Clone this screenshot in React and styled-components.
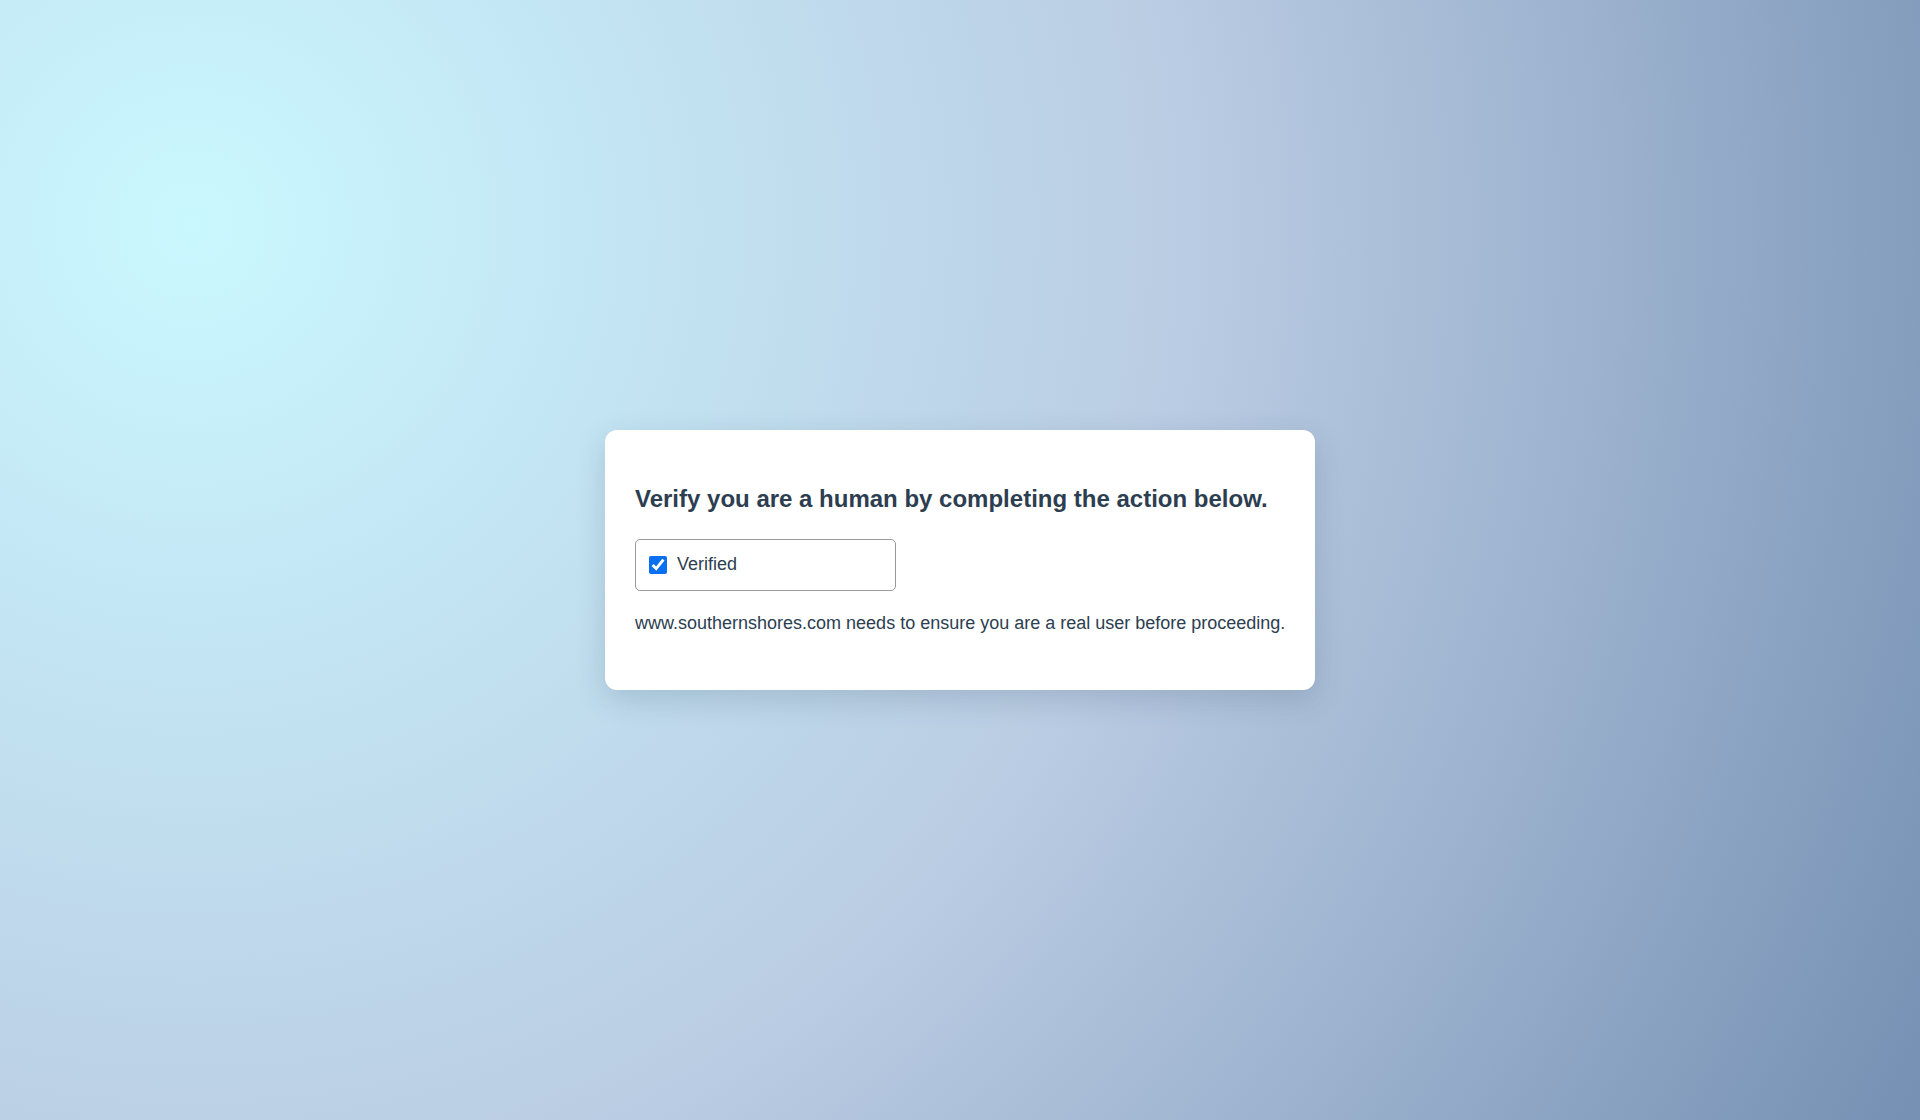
import styled, { createGlobalStyle } from "styled-components"

const GlobalStyle = createGlobalStyle`
  html, body {
    margin: 0;
    padding: 0;
    height: 100%;
  }
  body {
    font-family: "Liberation Sans", Arial, sans-serif;
    background: radial-gradient(circle at 10% 20%, rgb(202, 248, 255) 0%, rgb(186, 204, 227) 51.2%, rgb(117, 144, 179) 100%);
    background-attachment: fixed;
  }
  #root {
    height: 100%;
  }
`

const Page = styled.main`
  display: flex;
  justify-content: center;
  align-items: center;
  width: 100%;
  height: 100vh;
`

const Card = styled.section`
  box-sizing: border-box;
  width: 710px;
  padding: 55px 30px 56px;
  background-color: #ffffff;
  border-radius: 12px;
  box-shadow: 0 10px 30px rgba(40, 60, 90, 0.18);
`

const Title = styled.h1`
  margin: 0 0 26px;
  font-size: 24px;
  font-weight: 700;
  line-height: 1.15;
  color: #2c3e50;
`

const CheckBox = styled.label`
  box-sizing: border-box;
  display: flex;
  align-items: center;
  gap: 10px;
  width: 261px;
  height: 52px;
  padding: 0 13px;
  border: 1px solid #9a9a9a;
  border-radius: 5px;
  font-size: 18px;
  color: #2c3e50;
  cursor: pointer;
`

const Tick = styled.input`
  width: 18px;
  height: 18px;
  margin: 0;
  accent-color: #0a6ff0;
`

const Note = styled.p`
  margin: 22px 0 0;
  font-size: 18px;
  line-height: 1.15;
  white-space: nowrap;
  color: #2c3e50;
`

const App = () => {
  return (
    <>
      <GlobalStyle />
      <Page>
        <Card>
          <Title>Verify you are a human by completing the action below.</Title>
          <CheckBox>
            <Tick type="checkbox" defaultChecked />
            Verified
          </CheckBox>
          <Note>www.southernshores.com needs to ensure you are a real user before proceeding.</Note>
        </Card>
      </Page>
    </>
  )
}

export default App
